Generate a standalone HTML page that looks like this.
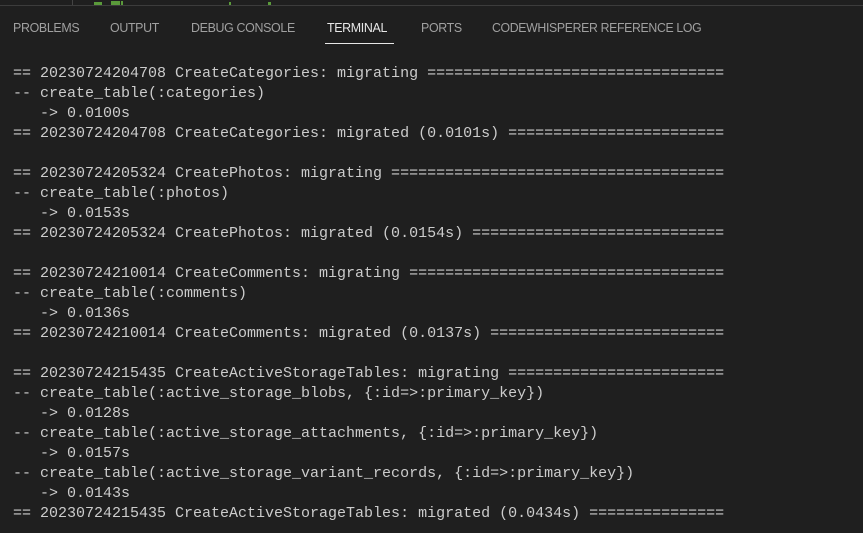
<!DOCTYPE html>
<html><head><meta charset="utf-8"><style>
html,body{margin:0;padding:0;background:#1f1f1f;width:863px;height:533px;overflow:hidden;position:relative}
.top{position:absolute;left:0;top:0;width:863px;height:5px;background:#1f1f1f;border-bottom:1px solid #3c3c3c}
.vl{position:absolute;left:72px;top:0;width:1px;height:5px;background:#444}
.g{position:absolute;top:2px;height:3px;background:#5a9a3a}
.tab{position:absolute;top:19px;font-family:"Liberation Sans",sans-serif;font-size:12.8px;color:#a0a0a0;line-height:18px;letter-spacing:-0.35px;transform-origin:0 0}
.act{color:#e7e7e7}
.ul{position:absolute;left:325px;top:43px;width:69px;height:1px;background:#e7e7e7}
pre{position:absolute;left:13px;top:64px;margin:0;font-family:"Liberation Mono",monospace;font-size:15px;line-height:20px;color:#cccccc}
</style></head><body>
<div class="top"></div><div class="vl"></div>
<div class="g" style="left:94px;width:8px"></div>
<div class="g" style="left:111px;width:9px;height:4px;top:1px"></div>
<div class="g" style="left:121px;width:2px;height:4px;top:1px"></div>
<div class="g" style="left:229px;width:2px"></div>
<div class="g" style="left:268px;width:3px"></div>
<span class="tab" style="left:13px;transform:scaleX(0.97)">PROBLEMS</span>
<span class="tab" style="left:110px;transform:scaleX(0.97)">OUTPUT</span>
<span class="tab" style="left:191px;transform:scaleX(0.97)">DEBUG CONSOLE</span>
<span class="tab act" style="left:327px;transform:scaleX(0.97)">TERMINAL</span>
<span class="tab" style="left:421px;transform:scaleX(0.97)">PORTS</span>
<span class="tab" style="left:492px;transform:scaleX(0.96)">CODEWHISPERER REFERENCE LOG</span>
<div class="ul"></div>
<pre>== 20230724204708 CreateCategories: migrating =================================
-- create_table(:categories)
   -&gt; 0.0100s
== 20230724204708 CreateCategories: migrated (0.0101s) ========================

== 20230724205324 CreatePhotos: migrating =====================================
-- create_table(:photos)
   -&gt; 0.0153s
== 20230724205324 CreatePhotos: migrated (0.0154s) ============================

== 20230724210014 CreateComments: migrating ===================================
-- create_table(:comments)
   -&gt; 0.0136s
== 20230724210014 CreateComments: migrated (0.0137s) ==========================

== 20230724215435 CreateActiveStorageTables: migrating ========================
-- create_table(:active_storage_blobs, {:id=&gt;:primary_key})
   -&gt; 0.0128s
-- create_table(:active_storage_attachments, {:id=&gt;:primary_key})
   -&gt; 0.0157s
-- create_table(:active_storage_variant_records, {:id=&gt;:primary_key})
   -&gt; 0.0143s
== 20230724215435 CreateActiveStorageTables: migrated (0.0434s) ===============</pre>
</body></html>
